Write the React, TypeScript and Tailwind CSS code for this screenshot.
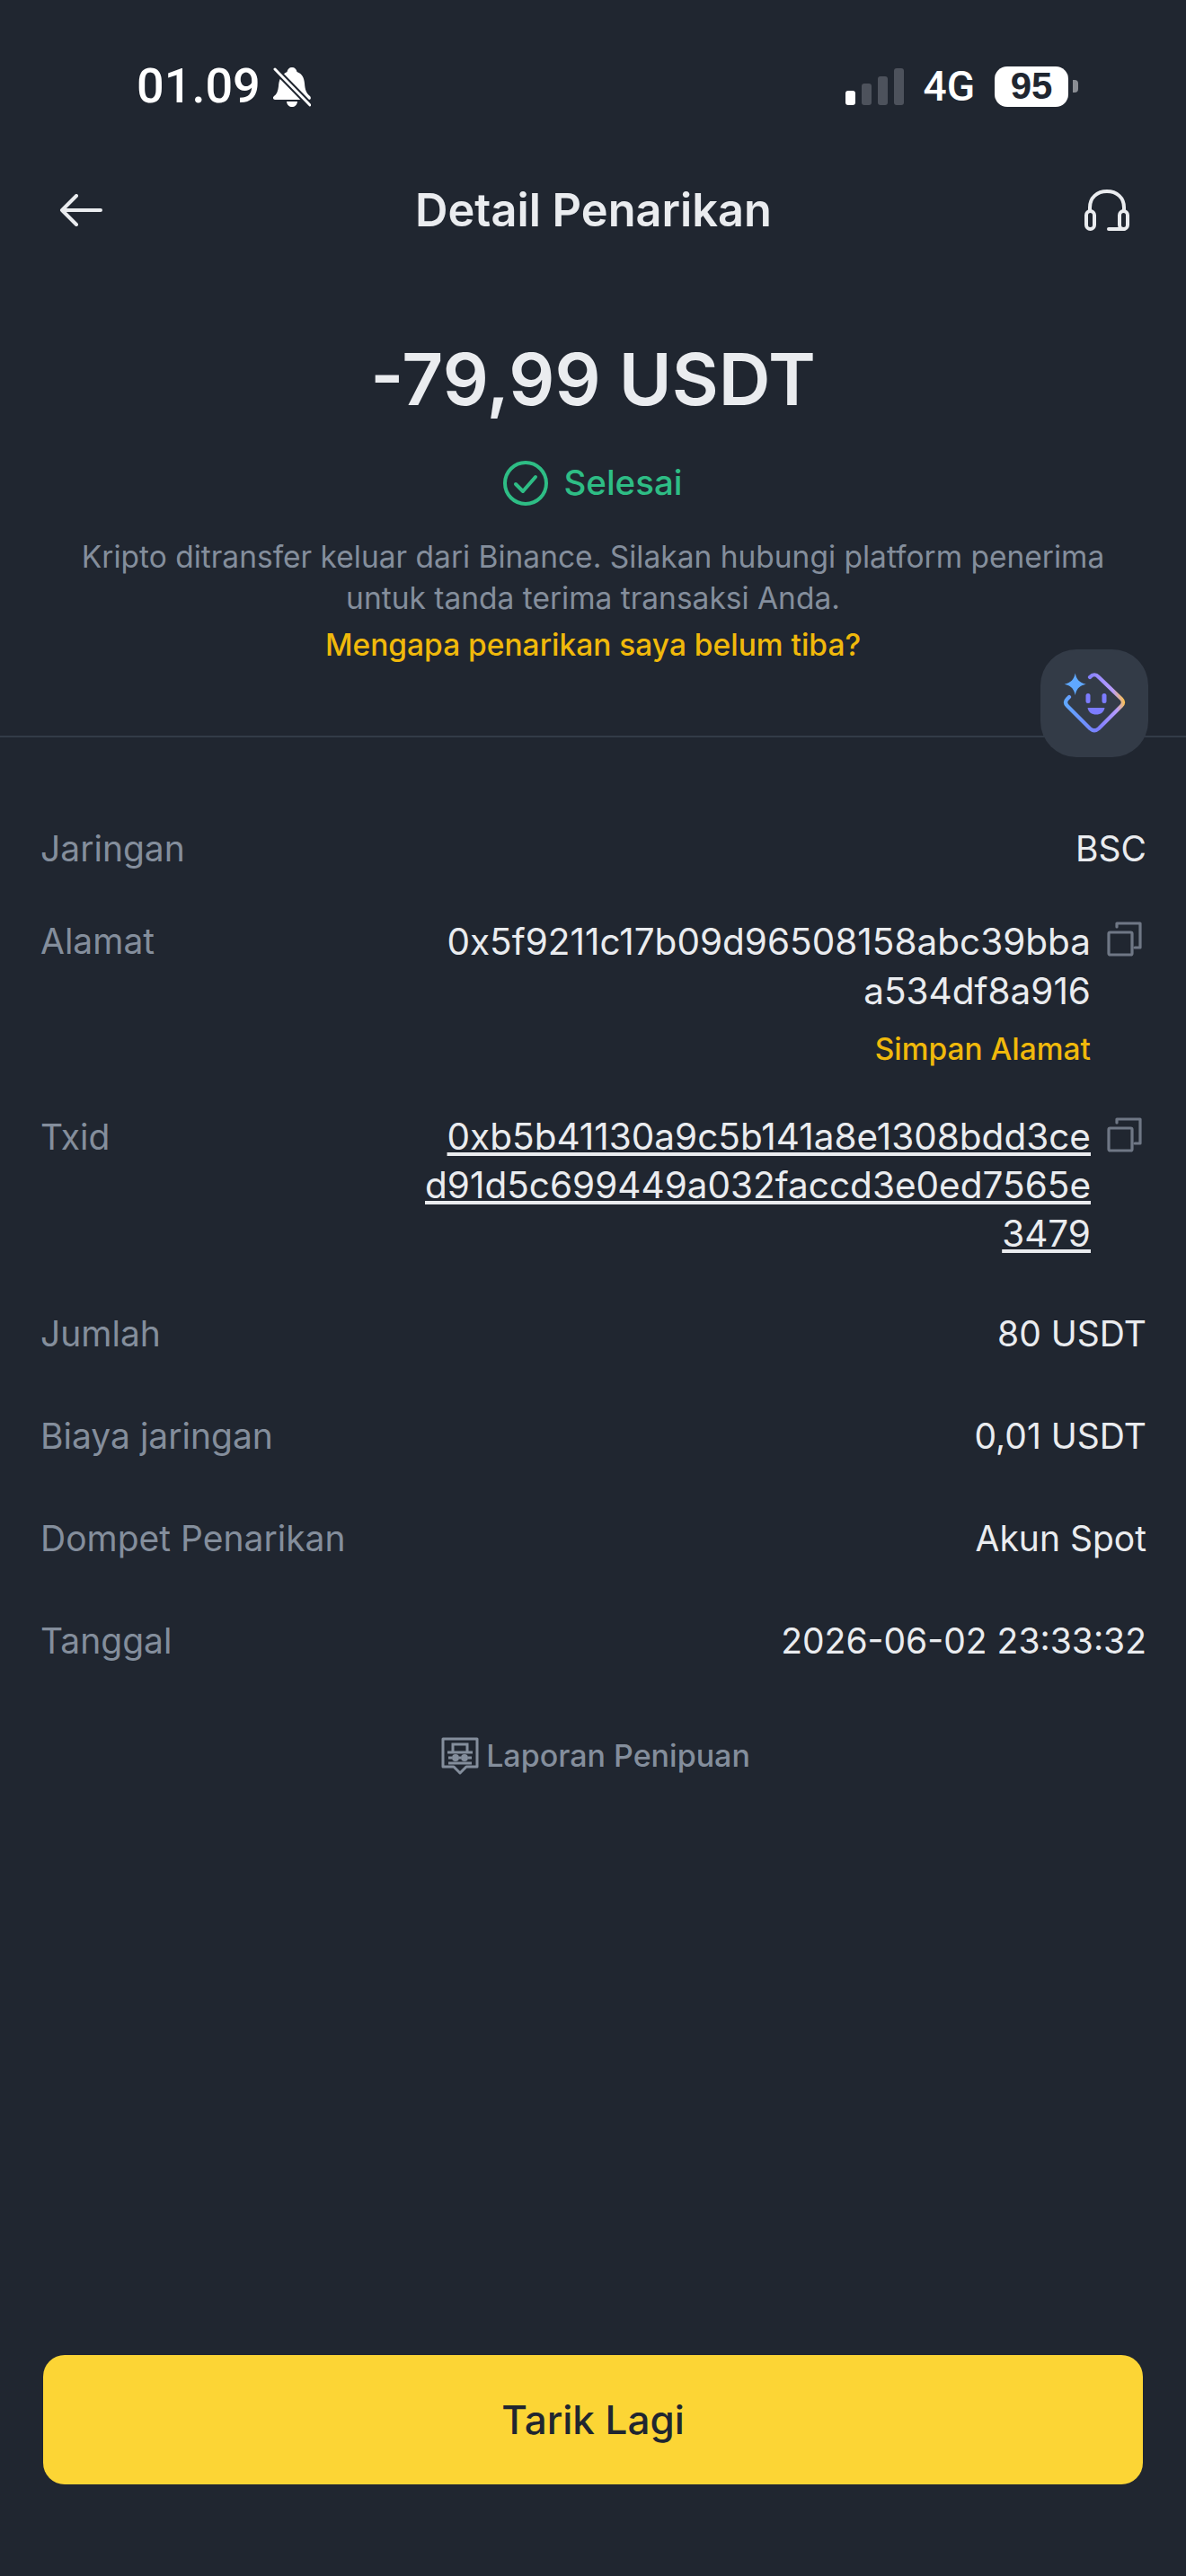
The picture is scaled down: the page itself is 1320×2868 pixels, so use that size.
const font = { fontFamily: "Inter, sans-serif" };

function Row({ label, value }: { label: string; value: string }) {
  return (
    <div className="flex items-center justify-between h-[60px]">
      <span className="text-[#848E9C] text-[39px]">{label}</span>
      <span className="text-[#EAECEF] text-[39px]">{value}</span>
    </div>
  );
}

function CopyIcon() {
  return (
    <svg className="w-[39px] h-[39px] shrink-0 mt-[5px] mr-[5px]" viewBox="0 0 39 39" fill="none" stroke="#6F7785" strokeWidth="3.200" strokeLinecap="round" strokeLinejoin="round">
      <path d="M11 6V2h26v27h-6" />
      <rect x="2" y="12" width="26" height="25" rx="1.500" />
    </svg>
  );
}

function AiIcon() {
  return (
    <svg className="w-[70px] h-[70px]" viewBox="0 0 70 70" fill="none">
      <defs>
        <linearGradient id="g" x1="0" y1="50" x2="69" y2="34" gradientUnits="userSpaceOnUse">
          <stop offset="0" stopColor="#5AB0FF" />
          <stop offset="0.5" stopColor="#7C7CFF" />
          <stop offset="0.85" stopColor="#B79CFF" />
          <stop offset="1" stopColor="#FFC24A" />
        </linearGradient>
      </defs>
      <path d="M13.700 1.500c1.300 6.500 4.300 10.500 12 12.200-7.700 1.700-10.700 5.700-12 12.300-1.300-6.600-4.300-10.600-12-12.300 7.700-1.700 10.700-5.700 12-12.200z" fill="#5FA8FF" />
      <path d="M30 6Q35 .5 40 6L65 30Q69 34 65 38L40 63Q35 67.500 30 63L5 38Q1 34 5 30L7 28" stroke="url(#g)" strokeWidth="4.200" strokeLinecap="round" />
      <rect x="25.500" y="24" width="5" height="11" rx="2.500" fill="#7C7CFF" />
      <rect x="43.500" y="24" width="5" height="11" rx="2.500" fill="#7C7CFF" />
      <path d="M27.500 40h19c-.8 5-4.500 7.500-9.500 7.500s-8.700-2.500-9.500-7.500z" fill="#7C7CFF" />
    </svg>
  );
}

export default function App() {
  return (
    <div className="w-[1320px] h-[2868px] bg-[#202630] flex flex-col relative overflow-hidden" style={font}>
      {/* status bar */}
      <div className="h-[192px] flex items-center justify-between pl-[152px] pr-[120px] shrink-0">
        <div className="flex items-center gap-[14px]">
          <span className="text-white text-[54px] font-medium leading-none" style={{ fontFamily: "Roboto, sans-serif" }}>01.09</span>
          <svg className="w-[42px] h-[45px]" viewBox="0 0 42 45" fill="white">
            <path d="M21 1c3 0 5 2 5.500 5c6 2 8 7 8.500 13c.5 7 2 11 6 14c1.500 1.500 1 4-1 4H2c-2 0-3-2.500-1-4c3-2 4.500-6 5-11c.4-6 2-12 9.500-16c.5-3 2.500-5 5.500-5z" />
            <path d="M15 39h12c-.5 4-3 6-6 6s-5.500-2-6-6z" />
            <path d="M2 3l39 40" stroke="#202630" strokeWidth="7" />
            <path d="M2 3l39 40" stroke="white" strokeWidth="3" strokeLinecap="round" />
          </svg>
        </div>
        <div className="flex items-center">
          <div className="flex items-end gap-[7px] h-[41px]">
            <div className="w-[11px] h-[16px] rounded-[3px] bg-white" />
            <div className="w-[11px] h-[24px] rounded-[3px] bg-[#4D525C]" />
            <div className="w-[11px] h-[32px] rounded-[3px] bg-[#4D525C]" />
            <div className="w-[11px] h-[41px] rounded-[3px] bg-[#4D525C]" />
          </div>
          <span className="ml-[22px] text-white text-[46px] font-medium leading-none" style={{ fontFamily: "Roboto, sans-serif" }}>4G</span>
          <div className="ml-[22px] w-[82px] h-[45px] rounded-[14px] bg-white flex items-center justify-center text-[#202630] text-[42px] font-bold leading-none" style={{ fontFamily: "'Liberation Sans', sans-serif" }}>95</div>
          <div className="ml-[5px] w-[6px] h-[14px] rounded-r-[4px] bg-[#8A8D93]" />
        </div>
      </div>

      {/* nav */}
      <div className="h-[84px] flex items-center justify-between pl-[66px] pr-[63px] shrink-0">
        <svg className="w-[48px] h-[36px]" viewBox="0 0 48 36" fill="none" stroke="#EAECEF" strokeWidth="4" strokeLinecap="round" strokeLinejoin="round">
          <path d="M46 18H3M19 2L3 18l16 16" />
        </svg>
        <span className="text-[#EAECEF] text-[50.5px] font-semibold">Detail Penarikan</span>
        <svg className="w-[50px] h-[46px]" viewBox="0 0 50 46" fill="none" stroke="#EAECEF" strokeWidth="4" strokeLinecap="round">
          <path d="M6 23V20C6 9 14 2 25 2s19 7 19 18v3" />
          <rect x="2" y="24" width="9" height="20" rx="4.500" />
          <rect x="39" y="24" width="9" height="20" rx="4.500" />
          <path d="M27 44h17" />
        </svg>
      </div>

      {/* summary */}
      <div className="flex flex-col items-center pt-[98px] shrink-0">
        <div className="text-[#EAECEF] text-[80px] font-semibold leading-[96px]">-79,99 USDT</div>
        <div className="flex items-center gap-[17px] mt-[42px] h-[52px]">
          <svg className="w-[50px] h-[50px]" viewBox="0 0 50 50" fill="none" stroke="#2EBD85" strokeWidth="4">
            <circle cx="25" cy="25" r="23" />
            <path d="M14 26l8 8 14-16" strokeLinecap="round" strokeLinejoin="round" />
          </svg>
          <span className="text-[#2EBD85] text-[38.5px] font-medium">Selesai</span>
        </div>
        <p className="mt-[33px] w-[1180px] text-center text-[#848E9C] text-[33.5px] leading-[46px]">
          Kripto ditransfer keluar dari Binance. Silakan hubungi platform penerima untuk tanda terima transaksi Anda.
        </p>
        <div className="mt-[4px] text-[#F0B90B] text-[33.5px] font-medium leading-[50px]">Mengapa penarikan saya belum tiba?</div>
      </div>

      <div className="h-[2px] bg-[#333B47] mt-[76px] shrink-0" />

      {/* details */}
      <div className="flex flex-col pl-[45px] pr-[44px] pt-[94px] shrink-0">
        <Row label="Jaringan" value="BSC" />
        <div className="flex justify-between mt-[46px]">
          <span className="text-[#848E9C] text-[39px] leading-[54px]">Alamat</span>
          <div className="flex gap-[18px]">
            <div className="flex flex-col items-end">
              <div className="text-[#EAECEF] text-[40.5px] leading-[55px] text-right whitespace-nowrap">
                0x5f9211c17b09d96508158abc39bba
                <br />
                a534df8a916
              </div>
              <div className="text-[#F0B90B] text-[33.5px] font-medium leading-[50px] mt-[12px]">Simpan Alamat</div>
            </div>
            <CopyIcon />
          </div>
        </div>
        <div className="flex justify-between mt-[46px]">
          <span className="text-[#848E9C] text-[39px] leading-[54px]">Txid</span>
          <div className="flex gap-[18px]">
            <div className="text-[#EAECEF] text-[40.5px] leading-[54px] text-right whitespace-nowrap underline">
              0xb5b41130a9c5b141a8e1308bdd3ce
              <br />
              d91d5c699449a032faccd3e0ed7565e
              <br />
              3479
            </div>
            <CopyIcon />
          </div>
        </div>
        <div className="flex flex-col gap-[54px] mt-[54px]">
          <Row label="Jumlah" value="80 USDT" />
          <Row label="Biaya jaringan" value="0,01 USDT" />
          <Row label="Dompet Penarikan" value="Akun Spot" />
          <Row label="Tanggal" value="2026-06-02 23:33:32" />
        </div>
        <div className="flex items-center justify-center gap-[8px] mt-[72px] pl-[5px] text-[#848E9C]">
          <svg className="w-[42px] h-[42px]" viewBox="0 0 42 42" fill="none" stroke="#848E9C" strokeWidth="3">
            <path d="M2 2h38v31H28l-7 7-7-7H2z" strokeLinejoin="round" />
            <path d="M13 16V8h16v8M7 17h28" />
            <circle cx="16" cy="23" r="2.500" fill="#848E9C" />
            <circle cx="26" cy="23" r="2.500" fill="#848E9C" />
            <path d="M8 23h4M20 23h2M30 23h4M8 29h26" />
          </svg>
          <span className="text-[34px] font-medium">Laporan Penipuan</span>
        </div>
      </div>

      {/* button */}
      <div className="mt-auto px-[48px] pb-[102px]">
        <div className="h-[144px] rounded-[24px] bg-[#FCD535] flex items-center justify-center text-[#202630] text-[44px] font-medium">Tarik Lagi</div>
      </div>

      {/* floating assistant */}
      <div className="absolute left-[1158px] top-[723px] w-[120px] h-[120px] rounded-[40px] bg-[#333B47] flex items-center justify-center">
        <AiIcon />
      </div>
    </div>
  );
}
